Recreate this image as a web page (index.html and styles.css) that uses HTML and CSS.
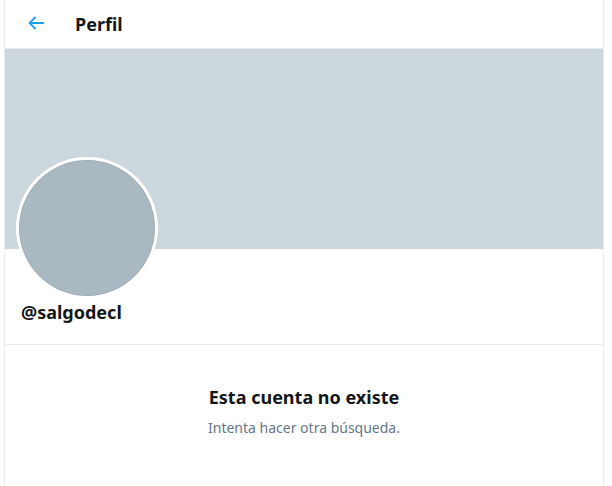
FILE: index.html
```html
<!DOCTYPE html>
<html>
<head>
    <meta charset="UTF-8">
    <title>Perfil</title>
    <link rel="stylesheet" href="styles.css">
</head>
<body>
    <div class="column">
        <div class="header">
            <div class="back">
                <svg viewBox="0 0 24 24" width="22" height="22">
                    <path d="M20 11H7.414l4.293-4.293a1 1 0 0 0-1.414-1.414l-6 6a1 1 0 0 0 0 1.414l6 6a1 1 0 0 0 1.414-1.414L7.414 13H20a1 1 0 1 0 0-2z" fill="#1da1f2"/>
                </svg>
            </div>
            <h2>Perfil</h2>
        </div>
        <div class="banner"></div>
        <div class="profile">
            <div class="avatar"><div class="avatar-inner"></div></div>
            <div class="username">@salgodecl</div>
        </div>
        <div class="empty">
            <div class="empty-title">Esta cuenta no existe</div>
            <div class="empty-text">Intenta hacer otra búsqueda.</div>
        </div>
    </div>
</body>
</html>
```
FILE: styles.css
```css
body {
    margin: 0;
    padding: 0;
    background-color: #FFFFFF;
    font-family: "Noto Sans", "Open Sans", sans-serif;
    color: #14171A;
}
.column {
    box-sizing: border-box;
    width: 600px;
    margin-left: 4px;
    min-height: 100vh;
    border-left: 1px solid #E6ECF0;
    border-right: 1px solid #E6ECF0;
}
.header {
    height: 48px;
    display: flex;
    align-items: center;
    border-bottom: 1px solid #E6ECF0;
}
.back {
    width: 22px;
    height: 22px;
    margin-left: 20px;
    margin-top: -2px;
}
.header h2 {
    margin: 0 0 0 28px;
    font-size: 18px;
    font-weight: 700;
    line-height: 24px;
}
.banner {
    height: 200px;
    background-color: #CCD6DD;
}
.profile {
    display: flow-root;
    padding: 0 11px;
    height: 95px;
    border-bottom: 1px solid #E6ECF0;
}
.avatar {
    width: 142px;
    height: 142px;
    margin-top: -92px;
    border-radius: 50%;
    background-color: #FFFFFF;
    display: flex;
    justify-content: center;
    align-items: center;
}
.avatar-inner {
    width: 134px;
    height: 134px;
    border-radius: 50%;
    background-color: #AAB8C2;
    box-shadow: 0 0 0 1px #9FADB7;
}
.username {
    margin: 1px 0 0 5px;
    font-size: 18px;
    font-weight: 700;
    line-height: 24px;
}
.empty {
    padding-top: 39px;
    text-align: center;
}
.empty-title {
    font-size: 18px;
    font-weight: 700;
    line-height: 26px;
}
.empty-text {
    margin-top: 8px;
    font-size: 14px;
    line-height: 20px;
    color: #657786;
}
```
